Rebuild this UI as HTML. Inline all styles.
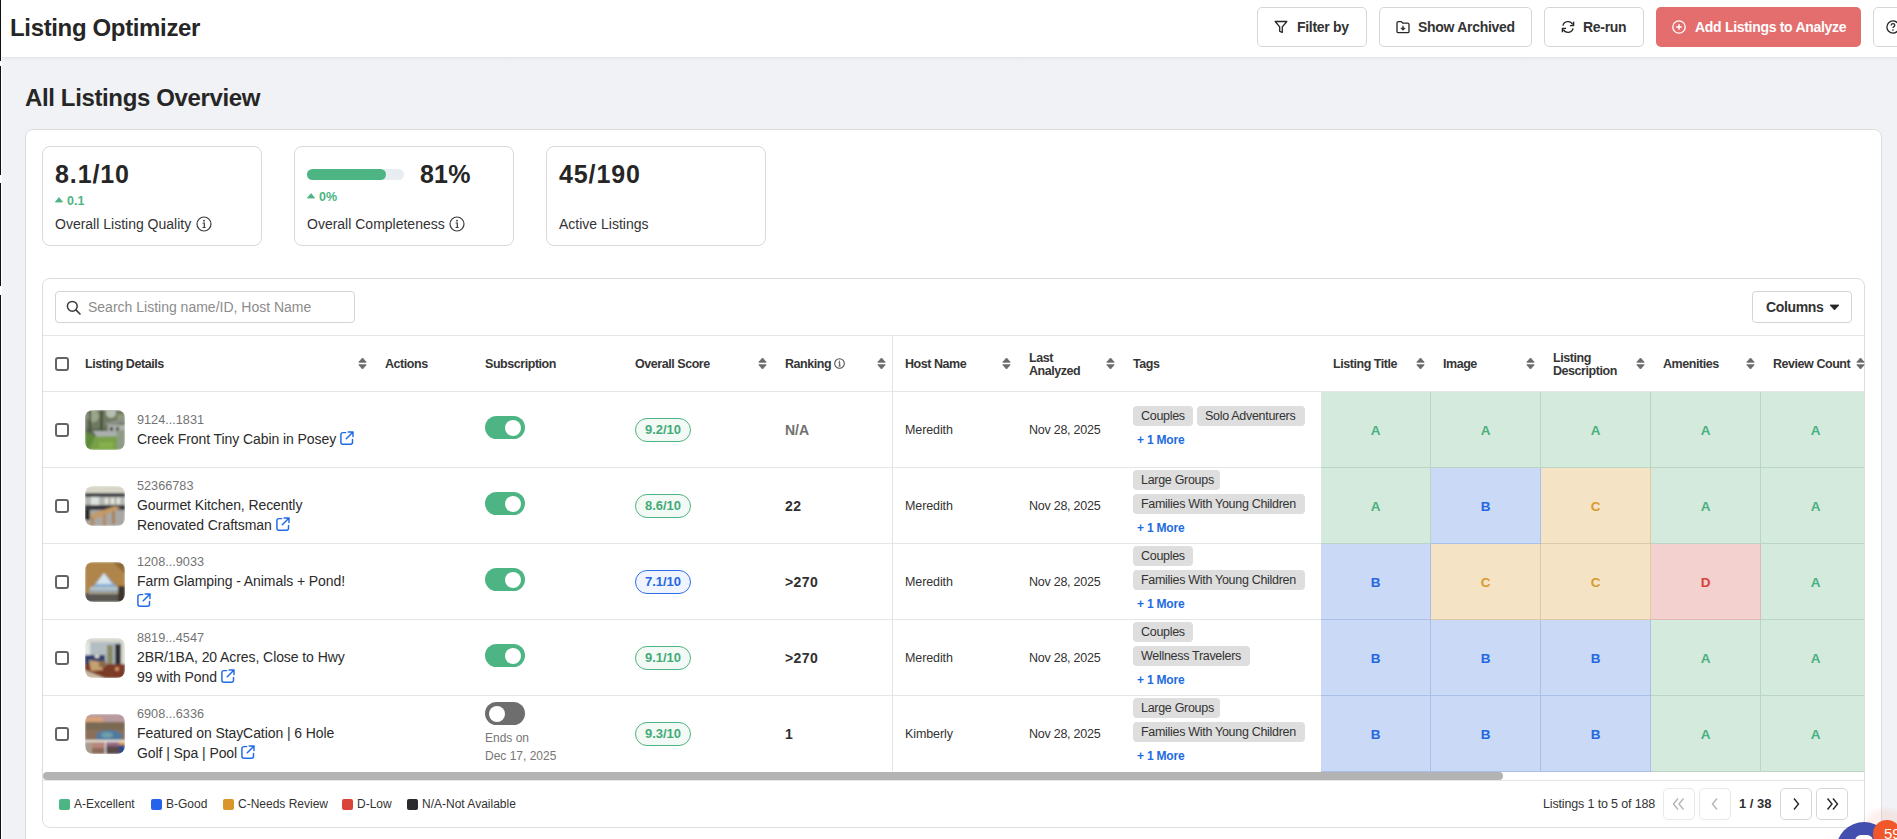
<!DOCTYPE html>
<html><head><meta charset="utf-8"><title>Listing Optimizer</title>
<style>
html,body{margin:0;padding:0;}
body{width:1897px;height:839px;overflow:hidden;position:relative;background:#f1f2f5;font-family:"Liberation Sans", sans-serif;}
.a{position:absolute;}
.t{position:absolute;white-space:nowrap;}
</style></head><body>
<div class="a" style="left:0px;top:0px;width:1897px;height:57px;background:#fff;"></div><div class="a" style="left:0px;top:57px;width:1897px;height:1px;background:#e6e7ea;"></div><div class="a" style="left:0px;top:58px;width:1897px;height:4px;background:linear-gradient(#eaebef,#f1f2f5);"></div><div class="a" style="left:0px;top:0px;width:2px;height:839px;background:#fff;"></div><div class="a" style="left:0px;top:0px;width:1px;height:61px;background:#111;"></div><div class="a" style="left:0px;top:66px;width:1px;height:109px;background:#111;"></div><div class="a" style="left:0px;top:183px;width:1px;height:103px;background:#111;"></div><div class="a" style="left:0px;top:295px;width:1px;height:544px;background:#111;"></div><div class="t" style="left:10px;top:10.68px;font-size:24px;line-height:34px;font-weight:700;color:#262626;letter-spacing:-0.35px;">Listing Optimizer</div><div class="a" style="left:1257px;top:7px;width:110px;height:40px;box-sizing:border-box;border:1px solid #d6d6d6;border-radius:5px;background:#fff;"></div><svg class="a" style="left:1274px;top:20px" width="14" height="14" viewBox="0 0 14 14"><path d="M1.2 1.5 H12.8 L8.3 6.8 V12.4 L5.7 11.3 V6.8 Z" fill="none" stroke="#262626" stroke-width="1.3" stroke-linejoin="round"/></svg><div class="t" style="left:1297px;top:17.15px;font-size:14px;line-height:20px;font-weight:700;color:#333;letter-spacing:-0.3px;">Filter by</div><div class="a" style="left:1379px;top:7px;width:153px;height:40px;box-sizing:border-box;border:1px solid #d6d6d6;border-radius:5px;background:#fff;"></div><svg class="a" style="left:1396px;top:20px" width="14" height="14" viewBox="0 0 14 14"><path d="M1 3 Q1 1.6 2.4 1.6 H5.3 L6.9 3.2 H11.6 Q13 3.2 13 4.6 V11.4 Q13 12.7 11.6 12.7 H2.4 Q1 12.7 1 11.4 Z" fill="none" stroke="#262626" stroke-width="1.3" stroke-linejoin="round"/><path d="M7 5.8 V9.3" stroke="#262626" stroke-width="1.3"/><path d="M4.9 8.2 L7 10.3 L9.1 8.2 Z" fill="#262626" stroke="#262626" stroke-width="0.8" stroke-linejoin="round"/></svg><div class="t" style="left:1418px;top:17.15px;font-size:14px;line-height:20px;font-weight:700;color:#333;letter-spacing:-0.3px;">Show Archived</div><div class="a" style="left:1544px;top:7px;width:100px;height:40px;box-sizing:border-box;border:1px solid #d6d6d6;border-radius:5px;background:#fff;"></div><svg class="a" style="left:1561px;top:20px" width="14" height="14" viewBox="0 0 14 14"><path d="M1.9 5.6 A5.2 5.2 0 0 1 11.6 4.5" fill="none" stroke="#262626" stroke-width="1.4"/><path d="M12.6 1.8 V5.6 H8.9" fill="none" stroke="#262626" stroke-width="1.4" stroke-linejoin="round"/><path d="M12.1 8.4 A5.2 5.2 0 0 1 2.4 9.5" fill="none" stroke="#262626" stroke-width="1.4"/><path d="M1.4 12.2 V8.4 H5.1" fill="none" stroke="#262626" stroke-width="1.4" stroke-linejoin="round"/></svg><div class="t" style="left:1583px;top:17.15px;font-size:14px;line-height:20px;font-weight:700;color:#333;letter-spacing:-0.3px;">Re-run</div><div class="a" style="left:1656px;top:7px;width:205px;height:40px;background:#e46e6e;border-radius:5px;"></div><svg class="a" style="left:1672px;top:20px" width="14" height="14" viewBox="0 0 14 14"><circle cx="7" cy="7" r="6.2" fill="none" stroke="#fff" stroke-width="1.3"/><path d="M7 4.2 V9.8 M4.2 7 H9.8" stroke="#fff" stroke-width="1.5"/></svg><div class="t" style="left:1695px;top:17.15px;font-size:14px;line-height:20px;font-weight:700;color:#fff;letter-spacing:-0.3px;">Add Listings to Analyze</div><div class="a" style="left:1873px;top:7px;width:40px;height:40px;box-sizing:border-box;border:1px solid #d6d6d6;border-radius:5px;background:#fff;"></div><svg class="a" style="left:1886px;top:20px" width="14" height="14" viewBox="0 0 14 14"><circle cx="7" cy="7" r="6.1" fill="none" stroke="#262626" stroke-width="1.3"/><path d="M5.2 5.4 Q5.2 3.6 7 3.6 Q8.8 3.6 8.8 5.2 Q8.8 6.3 7.6 6.8 Q7 7.1 7 8" fill="none" stroke="#262626" stroke-width="1.3"/><circle cx="7" cy="10.1" r="0.8" fill="#262626"/></svg><div class="t" style="left:25px;top:80.68px;font-size:24px;line-height:34px;font-weight:700;color:#262626;letter-spacing:-0.37px;">All Listings Overview</div><div class="a" style="left:25px;top:129px;width:1857px;height:760px;box-sizing:border-box;border:1px solid #dcdddf;border-radius:8px;background:#fff;"></div><div class="a" style="left:42px;top:146px;width:220px;height:100px;box-sizing:border-box;border:1px solid #dadada;border-radius:8px;background:#fff;"></div><div class="a" style="left:294px;top:146px;width:220px;height:100px;box-sizing:border-box;border:1px solid #dadada;border-radius:8px;background:#fff;"></div><div class="a" style="left:546px;top:146px;width:220px;height:100px;box-sizing:border-box;border:1px solid #dadada;border-radius:8px;background:#fff;"></div><div class="t" style="left:55px;top:157.33px;font-size:25px;line-height:35px;font-weight:700;color:#262626;letter-spacing:0.9px;">8.1/10</div><svg class="a" style="left:55px;top:197px" width="8" height="6" viewBox="0 0 8 6"><path d="M4 0.6 L7.6 5 H0.4 Z" fill="#4cb583" stroke="#4cb583" stroke-width="0.8" stroke-linejoin="round"/></svg><div class="t" style="left:67px;top:191.67px;font-size:12.5px;line-height:18px;font-weight:700;color:#4cb583;letter-spacing:0px;">0.1</div><div class="t" style="left:55px;top:214.45px;font-size:14px;line-height:20px;font-weight:400;color:#333;letter-spacing:0px;">Overall Listing Quality</div><svg class="a" style="left:196px;top:216px" width="16" height="16" viewBox="0 0 16 16"><circle cx="8" cy="8" r="7" fill="none" stroke="#3a3a3a" stroke-width="1.2"/><circle cx="8" cy="4.7" r="0.9" fill="#3a3a3a"/><path d="M6.6 7 H8.3 V11.3 M6.6 11.5 H9.6" fill="none" stroke="#3a3a3a" stroke-width="1.2"/></svg><div class="a" style="left:307px;top:169px;width:97px;height:11px;background:#e8edf2;border-radius:6px;"></div><div class="a" style="left:307px;top:169px;width:79px;height:11px;background:#4cb583;border-radius:6px;"></div><div class="t" style="left:420px;top:157.13px;font-size:25px;line-height:35px;font-weight:700;color:#262626;letter-spacing:0.2px;">81%</div><svg class="a" style="left:307px;top:193px" width="8" height="6" viewBox="0 0 8 6"><path d="M4 0.6 L7.6 5 H0.4 Z" fill="#4cb583" stroke="#4cb583" stroke-width="0.8" stroke-linejoin="round"/></svg><div class="t" style="left:319px;top:187.67px;font-size:12.5px;line-height:18px;font-weight:700;color:#4cb583;letter-spacing:0px;">0%</div><div class="t" style="left:307px;top:214.15px;font-size:14px;line-height:20px;font-weight:400;color:#333;letter-spacing:0px;">Overall Completeness</div><svg class="a" style="left:449px;top:216px" width="16" height="16" viewBox="0 0 16 16"><circle cx="8" cy="8" r="7" fill="none" stroke="#3a3a3a" stroke-width="1.2"/><circle cx="8" cy="4.7" r="0.9" fill="#3a3a3a"/><path d="M6.6 7 H8.3 V11.3 M6.6 11.5 H9.6" fill="none" stroke="#3a3a3a" stroke-width="1.2"/></svg><div class="t" style="left:559px;top:157.33px;font-size:25px;line-height:35px;font-weight:700;color:#262626;letter-spacing:0.9px;">45/190</div><div class="t" style="left:559px;top:214.15px;font-size:14px;line-height:20px;font-weight:400;color:#333;letter-spacing:0px;">Active Listings</div><div class="a" style="left:42px;top:278px;width:1823px;height:550px;box-sizing:border-box;border:1px solid #dcdddf;border-radius:8px;background:#fff;"></div><div class="a" style="left:55px;top:291px;width:300px;height:32px;box-sizing:border-box;border:1px solid #d4d4d4;border-radius:4px;background:#fff;"></div><svg class="a" style="left:66px;top:300px" width="15" height="15" viewBox="0 0 15 15"><circle cx="6.3" cy="6.3" r="4.9" fill="none" stroke="#3a3a3a" stroke-width="1.5"/><path d="M9.9 9.9 L14 14" stroke="#3a3a3a" stroke-width="1.6" stroke-linecap="round"/></svg><div class="t" style="left:88px;top:297.15px;font-size:14px;line-height:20px;font-weight:400;color:#8c8c8c;letter-spacing:0px;">Search Listing name/ID, Host Name</div><div class="a" style="left:1752px;top:291px;width:100px;height:32px;box-sizing:border-box;border:1px solid #d4d4d4;border-radius:4px;background:#fff;"></div><div class="t" style="left:1766px;top:297.15px;font-size:14px;line-height:20px;font-weight:700;color:#333;letter-spacing:-0.35px;">Columns</div><svg class="a" style="left:1829px;top:304px" width="11" height="7" viewBox="0 0 11 7"><path d="M1 1 H10 L5.5 6 Z" fill="#262626" stroke="#262626" stroke-width="0.8" stroke-linejoin="round"/></svg><div class="a" style="left:43px;top:335px;width:1821px;height:1px;background:#e6e6e6;"></div><div class="a" style="left:55px;top:357px;width:14px;height:14px;box-sizing:border-box;border:2px solid #646464;border-radius:3px;background:#fff;"></div><div class="t" style="left:85px;top:354.67px;font-size:12.5px;line-height:18px;font-weight:700;color:#363636;letter-spacing:-0.45px;">Listing Details</div><svg class="a" style="left:358px;top:357px" width="9" height="13" viewBox="0 0 9 13"><path d="M4.5 1 L8.2 5.2 H0.8 Z" fill="#6b6b6b" stroke="#6b6b6b" stroke-width="0.9" stroke-linejoin="round"/><path d="M4.5 12 L8.2 7.8 H0.8 Z" fill="#6b6b6b" stroke="#6b6b6b" stroke-width="0.9" stroke-linejoin="round"/></svg><div class="t" style="left:385px;top:354.67px;font-size:12.5px;line-height:18px;font-weight:700;color:#363636;letter-spacing:-0.45px;">Actions</div><div class="t" style="left:485px;top:354.67px;font-size:12.5px;line-height:18px;font-weight:700;color:#363636;letter-spacing:-0.45px;">Subscription</div><div class="t" style="left:635px;top:354.67px;font-size:12.5px;line-height:18px;font-weight:700;color:#363636;letter-spacing:-0.45px;">Overall Score</div><svg class="a" style="left:758px;top:357px" width="9" height="13" viewBox="0 0 9 13"><path d="M4.5 1 L8.2 5.2 H0.8 Z" fill="#6b6b6b" stroke="#6b6b6b" stroke-width="0.9" stroke-linejoin="round"/><path d="M4.5 12 L8.2 7.8 H0.8 Z" fill="#6b6b6b" stroke="#6b6b6b" stroke-width="0.9" stroke-linejoin="round"/></svg><div class="t" style="left:785px;top:354.67px;font-size:12.5px;line-height:18px;font-weight:700;color:#363636;letter-spacing:-0.45px;">Ranking</div><svg class="a" style="left:834px;top:358px" width="11" height="11" viewBox="0 0 16 16"><circle cx="8" cy="8" r="7" fill="none" stroke="#4a4a4a" stroke-width="1.5"/><circle cx="8" cy="4.7" r="0.9" fill="#4a4a4a"/><path d="M6.6 7 H8.3 V11.3 M6.6 11.5 H9.6" fill="none" stroke="#4a4a4a" stroke-width="1.5"/></svg><svg class="a" style="left:877px;top:357px" width="9" height="13" viewBox="0 0 9 13"><path d="M4.5 1 L8.2 5.2 H0.8 Z" fill="#6b6b6b" stroke="#6b6b6b" stroke-width="0.9" stroke-linejoin="round"/><path d="M4.5 12 L8.2 7.8 H0.8 Z" fill="#6b6b6b" stroke="#6b6b6b" stroke-width="0.9" stroke-linejoin="round"/></svg><div class="t" style="left:905px;top:354.67px;font-size:12.5px;line-height:18px;font-weight:700;color:#363636;letter-spacing:-0.45px;">Host Name</div><svg class="a" style="left:1002px;top:357px" width="9" height="13" viewBox="0 0 9 13"><path d="M4.5 1 L8.2 5.2 H0.8 Z" fill="#6b6b6b" stroke="#6b6b6b" stroke-width="0.9" stroke-linejoin="round"/><path d="M4.5 12 L8.2 7.8 H0.8 Z" fill="#6b6b6b" stroke="#6b6b6b" stroke-width="0.9" stroke-linejoin="round"/></svg><div class="t" style="left:1029px;top:348.67px;font-size:12.5px;line-height:18px;font-weight:700;color:#363636;letter-spacing:-0.45px;">Last</div><div class="t" style="left:1029px;top:361.67px;font-size:12.5px;line-height:18px;font-weight:700;color:#363636;letter-spacing:-0.45px;">Analyzed</div><svg class="a" style="left:1106px;top:357px" width="9" height="13" viewBox="0 0 9 13"><path d="M4.5 1 L8.2 5.2 H0.8 Z" fill="#6b6b6b" stroke="#6b6b6b" stroke-width="0.9" stroke-linejoin="round"/><path d="M4.5 12 L8.2 7.8 H0.8 Z" fill="#6b6b6b" stroke="#6b6b6b" stroke-width="0.9" stroke-linejoin="round"/></svg><div class="t" style="left:1133px;top:354.67px;font-size:12.5px;line-height:18px;font-weight:700;color:#363636;letter-spacing:-0.45px;">Tags</div><div class="t" style="left:1333px;top:354.67px;font-size:12.5px;line-height:18px;font-weight:700;color:#363636;letter-spacing:-0.45px;">Listing Title</div><svg class="a" style="left:1416px;top:357px" width="9" height="13" viewBox="0 0 9 13"><path d="M4.5 1 L8.2 5.2 H0.8 Z" fill="#6b6b6b" stroke="#6b6b6b" stroke-width="0.9" stroke-linejoin="round"/><path d="M4.5 12 L8.2 7.8 H0.8 Z" fill="#6b6b6b" stroke="#6b6b6b" stroke-width="0.9" stroke-linejoin="round"/></svg><div class="t" style="left:1443px;top:354.67px;font-size:12.5px;line-height:18px;font-weight:700;color:#363636;letter-spacing:-0.45px;">Image</div><svg class="a" style="left:1526px;top:357px" width="9" height="13" viewBox="0 0 9 13"><path d="M4.5 1 L8.2 5.2 H0.8 Z" fill="#6b6b6b" stroke="#6b6b6b" stroke-width="0.9" stroke-linejoin="round"/><path d="M4.5 12 L8.2 7.8 H0.8 Z" fill="#6b6b6b" stroke="#6b6b6b" stroke-width="0.9" stroke-linejoin="round"/></svg><div class="t" style="left:1553px;top:348.67px;font-size:12.5px;line-height:18px;font-weight:700;color:#363636;letter-spacing:-0.45px;">Listing</div><div class="t" style="left:1553px;top:361.67px;font-size:12.5px;line-height:18px;font-weight:700;color:#363636;letter-spacing:-0.45px;">Description</div><svg class="a" style="left:1636px;top:357px" width="9" height="13" viewBox="0 0 9 13"><path d="M4.5 1 L8.2 5.2 H0.8 Z" fill="#6b6b6b" stroke="#6b6b6b" stroke-width="0.9" stroke-linejoin="round"/><path d="M4.5 12 L8.2 7.8 H0.8 Z" fill="#6b6b6b" stroke="#6b6b6b" stroke-width="0.9" stroke-linejoin="round"/></svg><div class="t" style="left:1663px;top:354.67px;font-size:12.5px;line-height:18px;font-weight:700;color:#363636;letter-spacing:-0.45px;">Amenities</div><svg class="a" style="left:1746px;top:357px" width="9" height="13" viewBox="0 0 9 13"><path d="M4.5 1 L8.2 5.2 H0.8 Z" fill="#6b6b6b" stroke="#6b6b6b" stroke-width="0.9" stroke-linejoin="round"/><path d="M4.5 12 L8.2 7.8 H0.8 Z" fill="#6b6b6b" stroke="#6b6b6b" stroke-width="0.9" stroke-linejoin="round"/></svg><div class="t" style="left:1773px;top:354.67px;font-size:12.5px;line-height:18px;font-weight:700;color:#363636;letter-spacing:-0.45px;">Review Count</div><svg class="a" style="left:1856px;top:357px" width="9" height="13" viewBox="0 0 9 13"><path d="M4.5 1 L8.2 5.2 H0.8 Z" fill="#6b6b6b" stroke="#6b6b6b" stroke-width="0.9" stroke-linejoin="round"/><path d="M4.5 12 L8.2 7.8 H0.8 Z" fill="#6b6b6b" stroke="#6b6b6b" stroke-width="0.9" stroke-linejoin="round"/></svg><div class="a" style="left:1321px;top:392px;width:110px;height:76px;box-sizing:border-box;background:#d3eadd;border-bottom:1px solid #b9d5c5;border-right:1px solid #b9d5c5;"></div><div class="t" style="left:1370.5px;top:420.82px;font-size:13.5px;line-height:19px;font-weight:700;color:#4bb07e;letter-spacing:0px;width:10px;text-align:center;">A</div><div class="a" style="left:1431px;top:392px;width:110px;height:76px;box-sizing:border-box;background:#d3eadd;border-bottom:1px solid #b9d5c5;border-right:1px solid #b9d5c5;"></div><div class="t" style="left:1480.5px;top:420.82px;font-size:13.5px;line-height:19px;font-weight:700;color:#4bb07e;letter-spacing:0px;width:10px;text-align:center;">A</div><div class="a" style="left:1541px;top:392px;width:110px;height:76px;box-sizing:border-box;background:#d3eadd;border-bottom:1px solid #b9d5c5;border-right:1px solid #b9d5c5;"></div><div class="t" style="left:1590.5px;top:420.82px;font-size:13.5px;line-height:19px;font-weight:700;color:#4bb07e;letter-spacing:0px;width:10px;text-align:center;">A</div><div class="a" style="left:1651px;top:392px;width:110px;height:76px;box-sizing:border-box;background:#d3eadd;border-bottom:1px solid #b9d5c5;border-right:1px solid #b9d5c5;"></div><div class="t" style="left:1700.5px;top:420.82px;font-size:13.5px;line-height:19px;font-weight:700;color:#4bb07e;letter-spacing:0px;width:10px;text-align:center;">A</div><div class="a" style="left:1761px;top:392px;width:103px;height:76px;box-sizing:border-box;background:#d3eadd;border-bottom:1px solid #b9d5c5;"></div><div class="t" style="left:1810.5px;top:420.82px;font-size:13.5px;line-height:19px;font-weight:700;color:#4bb07e;letter-spacing:0px;width:10px;text-align:center;">A</div><div class="a" style="left:55px;top:423px;width:14px;height:14px;box-sizing:border-box;border:2px solid #646464;border-radius:3px;background:#fff;"></div><div class="a" style="left:85px;top:410px;width:40px;height:40px;border-radius:8px;overflow:hidden;"><svg style="display:block" width="40" height="40" viewBox="0 0 40 40"><defs><filter id="bl0" x="-10%" y="-10%" width="120%" height="120%"><feGaussianBlur stdDeviation="1.0"/></filter></defs><g filter="url(#bl0)"><rect width="40" height="40" fill="#5f6b52"/><rect x="0" y="0" width="40" height="18" fill="#6f7a62"/><circle cx="8" cy="6" r="6" fill="#9aa68c"/><circle cx="26" cy="3" r="5" fill="#b7bdb0"/><circle cx="36" cy="8" r="4" fill="#8e9a78"/><rect x="4" y="0" width="2" height="22" fill="#3e4636"/><rect x="15" y="0" width="3" height="22" fill="#4a5240"/><polygon points="20,13 40,8 40,12 23,16" fill="#8d8f8a"/><rect x="23" y="15" width="17" height="9" fill="#aeb2ab"/><rect x="25" y="17" width="3" height="6" fill="#35383a"/><rect x="31" y="17" width="3" height="5" fill="#474b48"/><polygon points="8,21 30,21 36,28 13,29" fill="#aab0ae"/><polygon points="0,27 40,26 40,40 0,40" fill="#78a046"/><polygon points="0,22 10,26 4,40 0,40" fill="#5f8a3a"/><rect x="32" y="20" width="8" height="20" fill="#8e9c86"/><rect x="14" y="32" width="14" height="6" fill="#86b04e"/></g></svg></div><div class="t" style="left:137px;top:410.60px;font-size:12.7px;line-height:18px;font-weight:400;color:#737373;letter-spacing:0px;">9124...1831</div><div class="t" style="left:137px;top:429.15px;font-size:14px;line-height:20px;font-weight:400;color:#2b2b2b;letter-spacing:-0.08px;">Creek Front Tiny Cabin in Posey<svg style="display:inline-block;vertical-align:-1px;margin-left:4px" width="14" height="14" viewBox="0 0 14 14"><path d="M5.7 1.6 H3 Q0.9 1.6 0.9 3.7 V11.2 Q0.9 13.2 3 13.2 H10.4 Q12.5 13.2 12.5 11.2 V8.5" fill="none" stroke="#1f6ae6" stroke-width="1.45" stroke-linecap="round"/><path d="M8.2 1 H13 V5.4 M13 1 L6.3 7.7" fill="none" stroke="#1f6ae6" stroke-width="1.45" stroke-linecap="round" stroke-linejoin="round"/></svg></div><div class="a" style="left:485px;top:416px;width:40px;height:23px;background:#4cb583;border-radius:12px;"></div><div class="a" style="left:505px;top:420px;width:16px;height:16px;background:#fff;border-radius:50%;"></div><div class="a" style="left:635px;top:418px;width:56px;height:24px;box-sizing:border-box;border:1px solid #4cb583;border-radius:12px;background:#f3faf6;"></div><div class="t" style="left:635px;top:421.49px;font-size:13px;line-height:18px;font-weight:700;color:#43ab78;letter-spacing:0px;width:56px;text-align:center;">9.2/10</div><div class="t" style="left:785px;top:419.65px;font-size:14px;line-height:20px;font-weight:700;color:#707070;letter-spacing:0px;">N/A</div><div class="t" style="left:905px;top:420.67px;font-size:12.5px;line-height:18px;font-weight:400;color:#333;letter-spacing:-0.1px;">Meredith</div><div class="t" style="left:1029px;top:420.67px;font-size:12.5px;line-height:18px;font-weight:400;color:#333;letter-spacing:-0.25px;">Nov 28, 2025</div><div class="a" style="left:1133px;top:406px;width:60px;height:20px;background:#dedede;border-radius:4px;"></div><div class="t" style="left:1141px;top:406.67px;font-size:12.5px;line-height:18px;font-weight:400;color:#333;letter-spacing:-0.3px;">Couples</div><div class="a" style="left:1197px;top:406px;width:108px;height:20px;background:#dedede;border-radius:4px;"></div><div class="t" style="left:1205px;top:406.67px;font-size:12.5px;line-height:18px;font-weight:400;color:#333;letter-spacing:-0.3px;">Solo Adventurers</div><div class="t" style="left:1137px;top:432.34px;font-size:12px;line-height:17px;font-weight:700;color:#1f6be0;letter-spacing:-0.2px;">+ 1 More</div><div class="a" style="left:43px;top:467px;width:1278px;height:1px;background:#e6e6e6;"></div><div class="a" style="left:1321px;top:468px;width:110px;height:76px;box-sizing:border-box;background:#d3eadd;border-bottom:1px solid #b9d5c5;border-right:1px solid #b9d5c5;"></div><div class="t" style="left:1370.5px;top:496.82px;font-size:13.5px;line-height:19px;font-weight:700;color:#4bb07e;letter-spacing:0px;width:10px;text-align:center;">A</div><div class="a" style="left:1431px;top:468px;width:110px;height:76px;box-sizing:border-box;background:#c9d9f6;border-bottom:1px solid #a9bfe8;border-right:1px solid #a9bfe8;"></div><div class="t" style="left:1480.5px;top:496.82px;font-size:13.5px;line-height:19px;font-weight:700;color:#2467e0;letter-spacing:0px;width:10px;text-align:center;">B</div><div class="a" style="left:1541px;top:468px;width:110px;height:76px;box-sizing:border-box;background:#f4e3c5;border-bottom:1px solid #dfcaa8;border-right:1px solid #dfcaa8;"></div><div class="t" style="left:1590.5px;top:496.82px;font-size:13.5px;line-height:19px;font-weight:700;color:#d99a2d;letter-spacing:0px;width:10px;text-align:center;">C</div><div class="a" style="left:1651px;top:468px;width:110px;height:76px;box-sizing:border-box;background:#d3eadd;border-bottom:1px solid #b9d5c5;border-right:1px solid #b9d5c5;"></div><div class="t" style="left:1700.5px;top:496.82px;font-size:13.5px;line-height:19px;font-weight:700;color:#4bb07e;letter-spacing:0px;width:10px;text-align:center;">A</div><div class="a" style="left:1761px;top:468px;width:103px;height:76px;box-sizing:border-box;background:#d3eadd;border-bottom:1px solid #b9d5c5;"></div><div class="t" style="left:1810.5px;top:496.82px;font-size:13.5px;line-height:19px;font-weight:700;color:#4bb07e;letter-spacing:0px;width:10px;text-align:center;">A</div><div class="a" style="left:55px;top:499px;width:14px;height:14px;box-sizing:border-box;border:2px solid #646464;border-radius:3px;background:#fff;"></div><div class="a" style="left:85px;top:486px;width:40px;height:40px;border-radius:8px;overflow:hidden;"><svg style="display:block" width="40" height="40" viewBox="0 0 40 40"><defs><filter id="bl1" x="-10%" y="-10%" width="120%" height="120%"><feGaussianBlur stdDeviation="1.0"/></filter></defs><g filter="url(#bl1)"><rect width="40" height="40" fill="#9c9e9a"/><rect x="0" y="0" width="40" height="7" fill="#d7d6c8"/><rect x="0" y="7" width="40" height="4" fill="#3f4246"/><rect x="0" y="11" width="40" height="9" fill="#b4b8b2"/><rect x="6" y="11" width="8" height="8" fill="#dfe3df"/><rect x="20" y="12" width="3" height="6" fill="#e8e8dc"/><rect x="26" y="12" width="3" height="6" fill="#e8e8dc"/><rect x="32" y="12" width="3" height="6" fill="#e8e8dc"/><rect x="0" y="19" width="40" height="5" fill="#34373c"/><rect x="0" y="24" width="40" height="16" fill="#a9a7a3"/><polygon points="4,29 30,20 36,22 10,33" fill="#c49a66"/><rect x="6" y="31" width="3" height="9" fill="#b0885a"/><rect x="18" y="28" width="3" height="12" fill="#b48c5c"/><rect x="27" y="25" width="3" height="13" fill="#a88055"/><rect x="0" y="24" width="5" height="10" fill="#26292c"/></g></svg></div><div class="t" style="left:137px;top:476.60px;font-size:12.7px;line-height:18px;font-weight:400;color:#737373;letter-spacing:0px;">52366783</div><div class="t" style="left:137px;top:495.15px;font-size:14px;line-height:20px;font-weight:400;color:#2b2b2b;letter-spacing:-0.08px;">Gourmet Kitchen, Recently</div><div class="t" style="left:137px;top:515.15px;font-size:14px;line-height:20px;font-weight:400;color:#2b2b2b;letter-spacing:-0.08px;">Renovated Craftsman<svg style="display:inline-block;vertical-align:-1px;margin-left:4px" width="14" height="14" viewBox="0 0 14 14"><path d="M5.7 1.6 H3 Q0.9 1.6 0.9 3.7 V11.2 Q0.9 13.2 3 13.2 H10.4 Q12.5 13.2 12.5 11.2 V8.5" fill="none" stroke="#1f6ae6" stroke-width="1.45" stroke-linecap="round"/><path d="M8.2 1 H13 V5.4 M13 1 L6.3 7.7" fill="none" stroke="#1f6ae6" stroke-width="1.45" stroke-linecap="round" stroke-linejoin="round"/></svg></div><div class="a" style="left:485px;top:492px;width:40px;height:23px;background:#4cb583;border-radius:12px;"></div><div class="a" style="left:505px;top:496px;width:16px;height:16px;background:#fff;border-radius:50%;"></div><div class="a" style="left:635px;top:494px;width:56px;height:24px;box-sizing:border-box;border:1px solid #4cb583;border-radius:12px;background:#f3faf6;"></div><div class="t" style="left:635px;top:497.49px;font-size:13px;line-height:18px;font-weight:700;color:#43ab78;letter-spacing:0px;width:56px;text-align:center;">8.6/10</div><div class="t" style="left:785px;top:495.65px;font-size:14px;line-height:20px;font-weight:700;color:#303030;letter-spacing:0.4px;">22</div><div class="t" style="left:905px;top:496.67px;font-size:12.5px;line-height:18px;font-weight:400;color:#333;letter-spacing:-0.1px;">Meredith</div><div class="t" style="left:1029px;top:496.67px;font-size:12.5px;line-height:18px;font-weight:400;color:#333;letter-spacing:-0.25px;">Nov 28, 2025</div><div class="a" style="left:1133px;top:470px;width:87px;height:20px;background:#dedede;border-radius:4px;"></div><div class="t" style="left:1141px;top:470.67px;font-size:12.5px;line-height:18px;font-weight:400;color:#333;letter-spacing:-0.3px;">Large Groups</div><div class="a" style="left:1133px;top:494px;width:172px;height:20px;background:#dedede;border-radius:4px;"></div><div class="t" style="left:1141px;top:494.67px;font-size:12.5px;line-height:18px;font-weight:400;color:#333;letter-spacing:-0.3px;">Families With Young Children</div><div class="t" style="left:1137px;top:520.34px;font-size:12px;line-height:17px;font-weight:700;color:#1f6be0;letter-spacing:-0.2px;">+ 1 More</div><div class="a" style="left:43px;top:543px;width:1278px;height:1px;background:#e6e6e6;"></div><div class="a" style="left:1321px;top:544px;width:110px;height:76px;box-sizing:border-box;background:#c9d9f6;border-bottom:1px solid #a9bfe8;border-right:1px solid #a9bfe8;"></div><div class="t" style="left:1370.5px;top:572.82px;font-size:13.5px;line-height:19px;font-weight:700;color:#2467e0;letter-spacing:0px;width:10px;text-align:center;">B</div><div class="a" style="left:1431px;top:544px;width:110px;height:76px;box-sizing:border-box;background:#f4e3c5;border-bottom:1px solid #dfcaa8;border-right:1px solid #dfcaa8;"></div><div class="t" style="left:1480.5px;top:572.82px;font-size:13.5px;line-height:19px;font-weight:700;color:#d99a2d;letter-spacing:0px;width:10px;text-align:center;">C</div><div class="a" style="left:1541px;top:544px;width:110px;height:76px;box-sizing:border-box;background:#f4e3c5;border-bottom:1px solid #dfcaa8;border-right:1px solid #dfcaa8;"></div><div class="t" style="left:1590.5px;top:572.82px;font-size:13.5px;line-height:19px;font-weight:700;color:#d99a2d;letter-spacing:0px;width:10px;text-align:center;">C</div><div class="a" style="left:1651px;top:544px;width:110px;height:76px;box-sizing:border-box;background:#f3d1cf;border-bottom:1px solid #e0b8b5;border-right:1px solid #e0b8b5;"></div><div class="t" style="left:1700.5px;top:572.82px;font-size:13.5px;line-height:19px;font-weight:700;color:#d8433c;letter-spacing:0px;width:10px;text-align:center;">D</div><div class="a" style="left:1761px;top:544px;width:103px;height:76px;box-sizing:border-box;background:#d3eadd;border-bottom:1px solid #b9d5c5;"></div><div class="t" style="left:1810.5px;top:572.82px;font-size:13.5px;line-height:19px;font-weight:700;color:#4bb07e;letter-spacing:0px;width:10px;text-align:center;">A</div><div class="a" style="left:55px;top:575px;width:14px;height:14px;box-sizing:border-box;border:2px solid #646464;border-radius:3px;background:#fff;"></div><div class="a" style="left:85px;top:562px;width:40px;height:40px;border-radius:8px;overflow:hidden;"><svg style="display:block" width="40" height="40" viewBox="0 0 40 40"><defs><filter id="bl2" x="-10%" y="-10%" width="120%" height="120%"><feGaussianBlur stdDeviation="1.0"/></filter></defs><g filter="url(#bl2)"><rect width="40" height="40" fill="#b08548"/><polygon points="28,0 40,0 40,12" fill="#8f6a38"/><polygon points="19,11 2,32 38,32" fill="#86aed6"/><polygon points="19,11 11,22 27,22" fill="#d6e4ec"/><rect x="5" y="25" width="30" height="3" fill="#b8c4c6"/><rect x="0" y="31" width="40" height="9" fill="#5a5751"/><rect x="4" y="29" width="30" height="3" fill="#a29e8c"/><rect x="33" y="24" width="7" height="16" fill="#3e342a"/></g></svg></div><div class="t" style="left:137px;top:552.60px;font-size:12.7px;line-height:18px;font-weight:400;color:#737373;letter-spacing:0px;">1208...9033</div><div class="t" style="left:137px;top:571.15px;font-size:14px;line-height:20px;font-weight:400;color:#2b2b2b;letter-spacing:-0.08px;">Farm Glamping - Animals + Pond!</div><div class="t" style="left:137px;top:591.15px;font-size:14px;line-height:20px;font-weight:400;color:#2b2b2b;letter-spacing:-0.08px;"></div><svg class="a" style="left:137px;top:593px" width="14" height="14" viewBox="0 0 14 14"><path d="M5.7 1.6 H3 Q0.9 1.6 0.9 3.7 V11.2 Q0.9 13.2 3 13.2 H10.4 Q12.5 13.2 12.5 11.2 V8.5" fill="none" stroke="#1f6ae6" stroke-width="1.45" stroke-linecap="round"/><path d="M8.2 1 H13 V5.4 M13 1 L6.3 7.7" fill="none" stroke="#1f6ae6" stroke-width="1.45" stroke-linecap="round" stroke-linejoin="round"/></svg><div class="a" style="left:485px;top:568px;width:40px;height:23px;background:#4cb583;border-radius:12px;"></div><div class="a" style="left:505px;top:572px;width:16px;height:16px;background:#fff;border-radius:50%;"></div><div class="a" style="left:635px;top:570px;width:56px;height:24px;box-sizing:border-box;border:1px solid #2f6fe6;border-radius:12px;background:#eff4fe;"></div><div class="t" style="left:635px;top:573.49px;font-size:13px;line-height:18px;font-weight:700;color:#2567e3;letter-spacing:0px;width:56px;text-align:center;">7.1/10</div><div class="t" style="left:785px;top:571.65px;font-size:14px;line-height:20px;font-weight:700;color:#303030;letter-spacing:0.4px;">&gt;270</div><div class="t" style="left:905px;top:572.67px;font-size:12.5px;line-height:18px;font-weight:400;color:#333;letter-spacing:-0.1px;">Meredith</div><div class="t" style="left:1029px;top:572.67px;font-size:12.5px;line-height:18px;font-weight:400;color:#333;letter-spacing:-0.25px;">Nov 28, 2025</div><div class="a" style="left:1133px;top:546px;width:60px;height:20px;background:#dedede;border-radius:4px;"></div><div class="t" style="left:1141px;top:546.67px;font-size:12.5px;line-height:18px;font-weight:400;color:#333;letter-spacing:-0.3px;">Couples</div><div class="a" style="left:1133px;top:570px;width:172px;height:20px;background:#dedede;border-radius:4px;"></div><div class="t" style="left:1141px;top:570.67px;font-size:12.5px;line-height:18px;font-weight:400;color:#333;letter-spacing:-0.3px;">Families With Young Children</div><div class="t" style="left:1137px;top:596.34px;font-size:12px;line-height:17px;font-weight:700;color:#1f6be0;letter-spacing:-0.2px;">+ 1 More</div><div class="a" style="left:43px;top:619px;width:1278px;height:1px;background:#e6e6e6;"></div><div class="a" style="left:1321px;top:620px;width:110px;height:76px;box-sizing:border-box;background:#c9d9f6;border-bottom:1px solid #a9bfe8;border-right:1px solid #a9bfe8;"></div><div class="t" style="left:1370.5px;top:648.82px;font-size:13.5px;line-height:19px;font-weight:700;color:#2467e0;letter-spacing:0px;width:10px;text-align:center;">B</div><div class="a" style="left:1431px;top:620px;width:110px;height:76px;box-sizing:border-box;background:#c9d9f6;border-bottom:1px solid #a9bfe8;border-right:1px solid #a9bfe8;"></div><div class="t" style="left:1480.5px;top:648.82px;font-size:13.5px;line-height:19px;font-weight:700;color:#2467e0;letter-spacing:0px;width:10px;text-align:center;">B</div><div class="a" style="left:1541px;top:620px;width:110px;height:76px;box-sizing:border-box;background:#c9d9f6;border-bottom:1px solid #a9bfe8;border-right:1px solid #a9bfe8;"></div><div class="t" style="left:1590.5px;top:648.82px;font-size:13.5px;line-height:19px;font-weight:700;color:#2467e0;letter-spacing:0px;width:10px;text-align:center;">B</div><div class="a" style="left:1651px;top:620px;width:110px;height:76px;box-sizing:border-box;background:#d3eadd;border-bottom:1px solid #b9d5c5;border-right:1px solid #b9d5c5;"></div><div class="t" style="left:1700.5px;top:648.82px;font-size:13.5px;line-height:19px;font-weight:700;color:#4bb07e;letter-spacing:0px;width:10px;text-align:center;">A</div><div class="a" style="left:1761px;top:620px;width:103px;height:76px;box-sizing:border-box;background:#d3eadd;border-bottom:1px solid #b9d5c5;"></div><div class="t" style="left:1810.5px;top:648.82px;font-size:13.5px;line-height:19px;font-weight:700;color:#4bb07e;letter-spacing:0px;width:10px;text-align:center;">A</div><div class="a" style="left:55px;top:651px;width:14px;height:14px;box-sizing:border-box;border:2px solid #646464;border-radius:3px;background:#fff;"></div><div class="a" style="left:85px;top:638px;width:40px;height:40px;border-radius:8px;overflow:hidden;"><svg style="display:block" width="40" height="40" viewBox="0 0 40 40"><defs><filter id="bl3" x="-10%" y="-10%" width="120%" height="120%"><feGaussianBlur stdDeviation="1.0"/></filter></defs><g filter="url(#bl3)"><rect width="40" height="40" fill="#b3bec2"/><rect x="0" y="0" width="40" height="4" fill="#d9d7cf"/><rect x="0" y="4" width="5" height="16" fill="#e4e6e4"/><rect x="22" y="7" width="6" height="21" fill="#8a8a66"/><rect x="30" y="6" width="6" height="23" fill="#2d2e34"/><rect x="36" y="4" width="4" height="30" fill="#dad9d2"/><rect x="0" y="17" width="20" height="9" fill="#2d3c6e"/><rect x="10" y="17" width="4" height="3" fill="#e0d8d2"/><rect x="0" y="26" width="40" height="14" fill="#7c3a26"/><polygon points="0,32 20,40 0,40" fill="#c9b8a0"/><polygon points="4,22 16,24 18,32 6,33" fill="#c6a170"/><rect x="14" y="23" width="7" height="6" fill="#8a6a4a"/><circle cx="32" cy="31" r="2" fill="#d89a6a"/></g></svg></div><div class="t" style="left:137px;top:628.60px;font-size:12.7px;line-height:18px;font-weight:400;color:#737373;letter-spacing:0px;">8819...4547</div><div class="t" style="left:137px;top:647.15px;font-size:14px;line-height:20px;font-weight:400;color:#2b2b2b;letter-spacing:-0.08px;">2BR/1BA, 20 Acres, Close to Hwy</div><div class="t" style="left:137px;top:667.15px;font-size:14px;line-height:20px;font-weight:400;color:#2b2b2b;letter-spacing:-0.08px;">99 with Pond<svg style="display:inline-block;vertical-align:-1px;margin-left:4px" width="14" height="14" viewBox="0 0 14 14"><path d="M5.7 1.6 H3 Q0.9 1.6 0.9 3.7 V11.2 Q0.9 13.2 3 13.2 H10.4 Q12.5 13.2 12.5 11.2 V8.5" fill="none" stroke="#1f6ae6" stroke-width="1.45" stroke-linecap="round"/><path d="M8.2 1 H13 V5.4 M13 1 L6.3 7.7" fill="none" stroke="#1f6ae6" stroke-width="1.45" stroke-linecap="round" stroke-linejoin="round"/></svg></div><div class="a" style="left:485px;top:644px;width:40px;height:23px;background:#4cb583;border-radius:12px;"></div><div class="a" style="left:505px;top:648px;width:16px;height:16px;background:#fff;border-radius:50%;"></div><div class="a" style="left:635px;top:646px;width:56px;height:24px;box-sizing:border-box;border:1px solid #4cb583;border-radius:12px;background:#f3faf6;"></div><div class="t" style="left:635px;top:649.49px;font-size:13px;line-height:18px;font-weight:700;color:#43ab78;letter-spacing:0px;width:56px;text-align:center;">9.1/10</div><div class="t" style="left:785px;top:647.65px;font-size:14px;line-height:20px;font-weight:700;color:#303030;letter-spacing:0.4px;">&gt;270</div><div class="t" style="left:905px;top:648.67px;font-size:12.5px;line-height:18px;font-weight:400;color:#333;letter-spacing:-0.1px;">Meredith</div><div class="t" style="left:1029px;top:648.67px;font-size:12.5px;line-height:18px;font-weight:400;color:#333;letter-spacing:-0.25px;">Nov 28, 2025</div><div class="a" style="left:1133px;top:622px;width:60px;height:20px;background:#dedede;border-radius:4px;"></div><div class="t" style="left:1141px;top:622.67px;font-size:12.5px;line-height:18px;font-weight:400;color:#333;letter-spacing:-0.3px;">Couples</div><div class="a" style="left:1133px;top:646px;width:117px;height:20px;background:#dedede;border-radius:4px;"></div><div class="t" style="left:1141px;top:646.67px;font-size:12.5px;line-height:18px;font-weight:400;color:#333;letter-spacing:-0.3px;">Wellness Travelers</div><div class="t" style="left:1137px;top:672.34px;font-size:12px;line-height:17px;font-weight:700;color:#1f6be0;letter-spacing:-0.2px;">+ 1 More</div><div class="a" style="left:43px;top:695px;width:1278px;height:1px;background:#e6e6e6;"></div><div class="a" style="left:1321px;top:696px;width:110px;height:76px;box-sizing:border-box;background:#c9d9f6;border-bottom:1px solid #a9bfe8;border-right:1px solid #a9bfe8;"></div><div class="t" style="left:1370.5px;top:724.82px;font-size:13.5px;line-height:19px;font-weight:700;color:#2467e0;letter-spacing:0px;width:10px;text-align:center;">B</div><div class="a" style="left:1431px;top:696px;width:110px;height:76px;box-sizing:border-box;background:#c9d9f6;border-bottom:1px solid #a9bfe8;border-right:1px solid #a9bfe8;"></div><div class="t" style="left:1480.5px;top:724.82px;font-size:13.5px;line-height:19px;font-weight:700;color:#2467e0;letter-spacing:0px;width:10px;text-align:center;">B</div><div class="a" style="left:1541px;top:696px;width:110px;height:76px;box-sizing:border-box;background:#c9d9f6;border-bottom:1px solid #a9bfe8;border-right:1px solid #a9bfe8;"></div><div class="t" style="left:1590.5px;top:724.82px;font-size:13.5px;line-height:19px;font-weight:700;color:#2467e0;letter-spacing:0px;width:10px;text-align:center;">B</div><div class="a" style="left:1651px;top:696px;width:110px;height:76px;box-sizing:border-box;background:#d3eadd;border-bottom:1px solid #b9d5c5;border-right:1px solid #b9d5c5;"></div><div class="t" style="left:1700.5px;top:724.82px;font-size:13.5px;line-height:19px;font-weight:700;color:#4bb07e;letter-spacing:0px;width:10px;text-align:center;">A</div><div class="a" style="left:1761px;top:696px;width:103px;height:76px;box-sizing:border-box;background:#d3eadd;border-bottom:1px solid #b9d5c5;"></div><div class="t" style="left:1810.5px;top:724.82px;font-size:13.5px;line-height:19px;font-weight:700;color:#4bb07e;letter-spacing:0px;width:10px;text-align:center;">A</div><div class="a" style="left:55px;top:727px;width:14px;height:14px;box-sizing:border-box;border:2px solid #646464;border-radius:3px;background:#fff;"></div><div class="a" style="left:85px;top:714px;width:40px;height:40px;border-radius:8px;overflow:hidden;"><svg style="display:block" width="40" height="40" viewBox="0 0 40 40"><defs><filter id="bl4" x="-10%" y="-10%" width="120%" height="120%"><feGaussianBlur stdDeviation="1.0"/></filter></defs><g filter="url(#bl4)"><rect width="40" height="40" fill="#6e6054"/><rect x="0" y="0" width="40" height="8" fill="#b89a9e"/><rect x="0" y="3" width="18" height="6" fill="#d8a27a"/><rect x="0" y="8" width="40" height="8" fill="#7a6a52"/><rect x="0" y="16" width="40" height="14" fill="#8a7058"/><ellipse cx="24" cy="22" rx="13" ry="6" fill="#4f7aa0"/><ellipse cx="22" cy="21" rx="6" ry="3" fill="#6fa0a8"/><rect x="0" y="26" width="40" height="2" fill="#e8e4dc"/><rect x="0" y="28" width="7" height="12" fill="#a89c8c"/><rect x="7" y="28" width="13" height="12" fill="#b8867a"/><rect x="7" y="34" width="13" height="6" fill="#8d6a5a"/><rect x="20" y="28" width="1" height="12" fill="#eee"/><rect x="21" y="28" width="13" height="12" fill="#5a4a48"/><rect x="21" y="28" width="13" height="4" fill="#9a6a8a"/><rect x="34" y="28" width="6" height="12" fill="#2a4a8a"/><rect x="34" y="28" width="6" height="3" fill="#d8a050"/></g></svg></div><div class="t" style="left:137px;top:704.60px;font-size:12.7px;line-height:18px;font-weight:400;color:#737373;letter-spacing:0px;">6908...6336</div><div class="t" style="left:137px;top:723.15px;font-size:14px;line-height:20px;font-weight:400;color:#2b2b2b;letter-spacing:-0.08px;">Featured on StayCation | 6 Hole</div><div class="t" style="left:137px;top:743.15px;font-size:14px;line-height:20px;font-weight:400;color:#2b2b2b;letter-spacing:-0.08px;">Golf | Spa | Pool<svg style="display:inline-block;vertical-align:-1px;margin-left:4px" width="14" height="14" viewBox="0 0 14 14"><path d="M5.7 1.6 H3 Q0.9 1.6 0.9 3.7 V11.2 Q0.9 13.2 3 13.2 H10.4 Q12.5 13.2 12.5 11.2 V8.5" fill="none" stroke="#1f6ae6" stroke-width="1.45" stroke-linecap="round"/><path d="M8.2 1 H13 V5.4 M13 1 L6.3 7.7" fill="none" stroke="#1f6ae6" stroke-width="1.45" stroke-linecap="round" stroke-linejoin="round"/></svg></div><div class="a" style="left:485px;top:702px;width:40px;height:23px;background:#6e6e6e;border-radius:12px;"></div><div class="a" style="left:489px;top:706px;width:16px;height:16px;background:#fff;border-radius:50%;"></div><div class="t" style="left:485px;top:730.34px;font-size:12px;line-height:17px;font-weight:400;color:#767676;letter-spacing:0px;">Ends on</div><div class="t" style="left:485px;top:748.34px;font-size:12px;line-height:17px;font-weight:400;color:#767676;letter-spacing:0px;">Dec 17, 2025</div><div class="a" style="left:635px;top:722px;width:56px;height:24px;box-sizing:border-box;border:1px solid #4cb583;border-radius:12px;background:#f3faf6;"></div><div class="t" style="left:635px;top:725.49px;font-size:13px;line-height:18px;font-weight:700;color:#43ab78;letter-spacing:0px;width:56px;text-align:center;">9.3/10</div><div class="t" style="left:785px;top:723.65px;font-size:14px;line-height:20px;font-weight:700;color:#303030;letter-spacing:0.4px;">1</div><div class="t" style="left:905px;top:724.67px;font-size:12.5px;line-height:18px;font-weight:400;color:#333;letter-spacing:-0.1px;">Kimberly</div><div class="t" style="left:1029px;top:724.67px;font-size:12.5px;line-height:18px;font-weight:400;color:#333;letter-spacing:-0.25px;">Nov 28, 2025</div><div class="a" style="left:1133px;top:698px;width:87px;height:20px;background:#dedede;border-radius:4px;"></div><div class="t" style="left:1141px;top:698.67px;font-size:12.5px;line-height:18px;font-weight:400;color:#333;letter-spacing:-0.3px;">Large Groups</div><div class="a" style="left:1133px;top:722px;width:172px;height:20px;background:#dedede;border-radius:4px;"></div><div class="t" style="left:1141px;top:722.67px;font-size:12.5px;line-height:18px;font-weight:400;color:#333;letter-spacing:-0.3px;">Families With Young Children</div><div class="t" style="left:1137px;top:748.34px;font-size:12px;line-height:17px;font-weight:700;color:#1f6be0;letter-spacing:-0.2px;">+ 1 More</div><div class="a" style="left:43px;top:391px;width:1821px;height:1px;background:#e6e6e6;"></div><div class="a" style="left:892px;top:336px;width:1px;height:435px;background:#e3e3e3;"></div><div class="a" style="left:43px;top:772px;width:1460px;height:8px;background:#b3b3b3;border-radius:4px;"></div><div class="a" style="left:43px;top:780px;width:1821px;height:1px;background:#e6e6e6;"></div><div class="a" style="left:59px;top:799px;width:11px;height:11px;background:#4cb583;border-radius:2px;"></div><div class="t" style="left:74px;top:796.34px;font-size:12px;line-height:17px;font-weight:400;color:#333;letter-spacing:0px;">A-Excellent</div><div class="a" style="left:151px;top:799px;width:11px;height:11px;background:#2563eb;border-radius:2px;"></div><div class="t" style="left:166px;top:796.34px;font-size:12px;line-height:17px;font-weight:400;color:#333;letter-spacing:0px;">B-Good</div><div class="a" style="left:223px;top:799px;width:11px;height:11px;background:#d9962b;border-radius:2px;"></div><div class="t" style="left:238px;top:796.34px;font-size:12px;line-height:17px;font-weight:400;color:#333;letter-spacing:0px;">C-Needs Review</div><div class="a" style="left:342px;top:799px;width:11px;height:11px;background:#d9443a;border-radius:2px;"></div><div class="t" style="left:357px;top:796.34px;font-size:12px;line-height:17px;font-weight:400;color:#333;letter-spacing:0px;">D-Low</div><div class="a" style="left:407px;top:799px;width:11px;height:11px;background:#2b2b2b;border-radius:2px;"></div><div class="t" style="left:422px;top:796.34px;font-size:12px;line-height:17px;font-weight:400;color:#333;letter-spacing:0px;">N/A-Not Available</div><div class="t" style="left:1543px;top:795.17px;font-size:12.5px;line-height:18px;font-weight:400;color:#333;letter-spacing:-0.15px;">Listings 1 to 5 of 188</div><div class="a" style="left:1663px;top:788px;width:32px;height:32px;box-sizing:border-box;border:1px solid #e9e9e9;border-radius:5px;background:#fff;"></div><svg class="a" style="left:1663px;top:788px" width="32" height="32" viewBox="0 0 32 32"><path d="M15 10.5 L10.5 16 L15 21.5 M20.5 10.5 L16 16 L20.5 21.5" fill="none" stroke="#b5b5b5" stroke-width="1.4"/></svg><div class="a" style="left:1699px;top:788px;width:32px;height:32px;box-sizing:border-box;border:1px solid #e9e9e9;border-radius:5px;background:#fff;"></div><svg class="a" style="left:1699px;top:788px" width="32" height="32" viewBox="0 0 32 32"><path d="M18 10.5 L13.5 16 L18 21.5" fill="none" stroke="#b5b5b5" stroke-width="1.4"/></svg><div class="t" style="left:1739px;top:795.49px;font-size:13px;line-height:18px;font-weight:700;color:#303030;letter-spacing:0px;">1 / 38</div><div class="a" style="left:1780px;top:788px;width:32px;height:32px;box-sizing:border-box;border:1px solid #d6d6d6;border-radius:5px;background:#fff;"></div><svg class="a" style="left:1780px;top:788px" width="32" height="32" viewBox="0 0 32 32"><path d="M14 10.5 L18.5 16 L14 21.5" fill="none" stroke="#262626" stroke-width="1.4"/></svg><div class="a" style="left:1816px;top:788px;width:32px;height:32px;box-sizing:border-box;border:1px solid #d6d6d6;border-radius:5px;background:#fff;"></div><svg class="a" style="left:1816px;top:788px" width="32" height="32" viewBox="0 0 32 32"><path d="M11.5 10.5 L16 16 L11.5 21.5 M17 10.5 L21.5 16 L17 21.5" fill="none" stroke="#262626" stroke-width="1.4"/></svg><div class="a" style="left:1859px;top:806px;width:52px;height:52px;background:radial-gradient(circle, rgba(240,87,43,0.12) 0, rgba(240,87,43,0.08) 55%, rgba(240,87,43,0) 72%);border-radius:50%;"></div><div class="a" style="left:1836px;top:822px;width:56px;height:56px;background:#434fae;border-radius:50%;"></div><div class="a" style="left:1855px;top:835px;width:18px;height:12px;background:#fff;border-radius:6px;"></div><div class="a" style="left:1873px;top:820px;width:28px;height:28px;background:#f0572b;border-radius:14px;"></div><div class="t" style="left:1884px;top:823.30px;font-size:15px;line-height:21px;font-weight:400;color:#fff;letter-spacing:0px;">59</div>
</body></html>
